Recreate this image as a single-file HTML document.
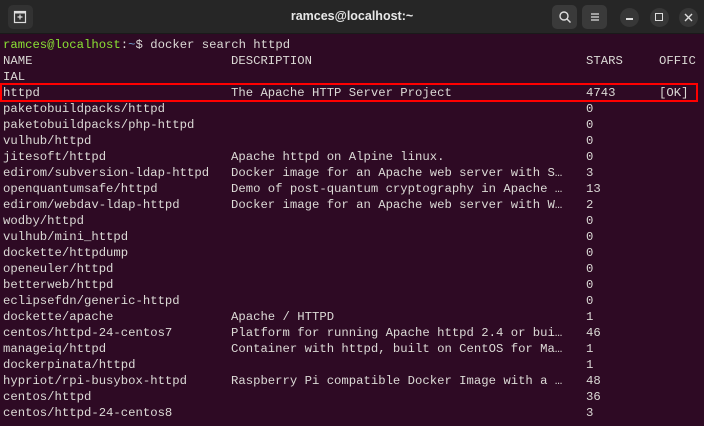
<!DOCTYPE html>
<html><head><meta charset="utf-8"><style>
*{margin:0;padding:0;box-sizing:border-box}
body{width:704px;height:426px;overflow:hidden;background:#2e0a24;position:relative;font-family:"Liberation Mono",monospace}
.tb{position:absolute;left:0;top:0;width:704px;height:34px;background:#262626;border-bottom:1px solid #1a1a1a}
.title{position:absolute;left:0;width:704px;top:9px;text-align:center;color:#e8e8e8;font:600 12.5px "Liberation Sans",sans-serif}
.btn{position:absolute;top:5px;width:25px;height:24px;border-radius:5px;background:#3a3a3a}
.circ{position:absolute;top:8px;width:19px;height:19px;border-radius:50%;background:#373737}
.term{position:absolute;left:3px;top:37px;font-size:12.28px;line-height:16px;color:#dcdad6;white-space:pre}
.row{position:absolute;left:0;height:16px;width:704px}
.row span{position:absolute;top:0}
.g{color:#8ae234}.b{color:#729fcf}
.box{position:absolute;left:0;top:83px;width:698px;height:19px;border:2.5px solid #ff0000}
</style></head><body>
<div class="tb">
 <div class="btn" style="left:8px;background:#323232"></div>
 <svg style="position:absolute;left:13px;top:10px" width="14" height="14" viewBox="0 0 14 14"><rect x="1.5" y="1.5" width="11" height="11" fill="none" stroke="#ddd" stroke-width="1.2"/><path d="M7 4.5v5M4.5 7h5" stroke="#ddd" stroke-width="1.2"/><rect x="1.5" y="1.5" width="11" height="2" fill="#ddd"/></svg>
 <div class="title">ramces@localhost:~</div>
 <div class="btn" style="left:552px"></div>
 <svg style="position:absolute;left:558px;top:10px" width="14" height="14" viewBox="0 0 14 14"><circle cx="6" cy="6" r="4" fill="none" stroke="#ddd" stroke-width="1.4"/><path d="M9 9l3.5 3.5" stroke="#ddd" stroke-width="1.4"/></svg>
 <div class="btn" style="left:582px"></div>
 <svg style="position:absolute;left:588px;top:10px" width="14" height="14" viewBox="0 0 14 14"><path d="M3 4h8M3 7h8M3 10h8" stroke="#ddd" stroke-width="1.3"/></svg>
 <div class="circ" style="left:620px"></div>
 <div style="position:absolute;left:626px;top:18px;width:7px;height:1.5px;background:#ddd"></div>
 <div class="circ" style="left:650px"></div>
 <div style="position:absolute;left:655px;top:13px;width:8px;height:8px;border:1.3px solid #ddd"></div>
 <div class="circ" style="left:679px"></div>
 <svg style="position:absolute;left:683px;top:12px" width="11" height="11" viewBox="0 0 11 11"><path d="M2 2l7 7M9 2l-7 7" stroke="#ddd" stroke-width="1.4"/></svg>
</div>
<div class="term">
<div class="row" style="top:0"><span style="left:0"><span class="g" style="position:static">ramces@localhost</span>:<span class="b" style="position:static">~</span>$ docker search httpd</span></div>
</div>
<div class="term" id="t"></div>
<div class="box"></div>
<script>
var L=[["NAME","DESCRIPTION","STARS","OFFIC"],["IAL","","",""],
["httpd","The Apache HTTP Server Project","4743","[OK]"],
["paketobuildpacks/httpd","","0",""],
["paketobuildpacks/php-httpd","","0",""],
["vulhub/httpd","","0",""],
["jitesoft/httpd","Apache httpd on Alpine linux.","0",""],
["edirom/subversion-ldap-httpd","Docker image for an Apache web server with S…","3",""],
["openquantumsafe/httpd","Demo of post-quantum cryptography in Apache …","13",""],
["edirom/webdav-ldap-httpd","Docker image for an Apache web server with W…","2",""],
["wodby/httpd","","0",""],["vulhub/mini_httpd","","0",""],["dockette/httpdump","","0",""],
["openeuler/httpd","","0",""],["betterweb/httpd","","0",""],["eclipsefdn/generic-httpd","","0",""],
["dockette/apache","Apache / HTTPD","1",""],
["centos/httpd-24-centos7","Platform for running Apache httpd 2.4 or bui…","46",""],
["manageiq/httpd","Container with httpd, built on CentOS for Ma…","1",""],
["dockerpinata/httpd","","1",""],
["hypriot/rpi-busybox-httpd","Raspberry Pi compatible Docker Image with a …","48",""],
["centos/httpd","","36",""],["centos/httpd-24-centos8","","3",""]];
var h="",X=[0,228,583,656];
L.forEach(function(r,i){h+='<div class="row" style="top:'+(16*(i+1))+'px">';r.forEach(function(c,j){if(c)h+='<span style="left:'+X[j]+'px">'+c+'</span>'});h+='</div>'});
document.getElementById("t").innerHTML=h;
</script>
</body></html>
